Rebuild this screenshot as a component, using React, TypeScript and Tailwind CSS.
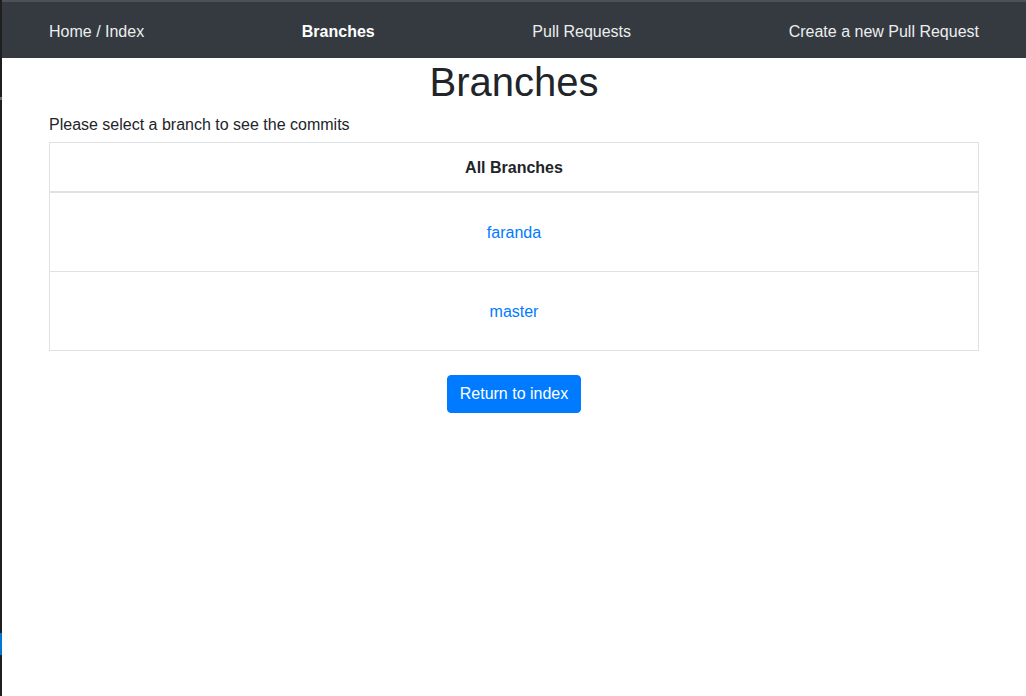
const navLinks = [
  { label: "Home / Index", active: false },
  { label: "Branches", active: true },
  { label: "Pull Requests", active: false },
  { label: "Create a new Pull Request", active: false },
];

const branches = ["faranda", "master"];

export default function App() {
  return (
    <div
      className="relative w-[1026px] h-[696px] bg-white flex text-[#212529] overflow-hidden"
      style={{ fontFamily: '"Liberation Sans", Arial, sans-serif' }}
    >
      {/* window edge strip */}
      <div className="relative w-[2px] shrink-0 bg-[#1f1f1f]">
        <div className="absolute left-0 top-[97px] w-[2px] h-[3px] bg-[#6b6b6b]" />
        <div className="absolute left-0 top-[633px] w-[2px] h-[22px] bg-[#0078d4]" />
      </div>

      <div className="flex-1">
        {/* Navbar */}
        <nav className="h-[58px] bg-[#343a40] border-t-2 border-[#4e5256] pt-[3px]">
          <div className="mx-auto w-[930px] h-full flex items-center justify-between text-[16px] leading-6">
            {navLinks.map((n) => (
              <a
                key={n.label}
                className={n.active ? "font-bold text-white" : "text-[#eceeef]"}
              >
                {n.label}
              </a>
            ))}
          </div>
        </nav>

        {/* Content */}
        <main className="mx-auto w-[930px]">
          <h1 className="text-center text-[40px] leading-[48px] mb-2">Branches</h1>
          <p className="text-[16px] leading-[22px] mb-[6px]">
            Please select a branch to see the commits
          </p>

          <div className="border border-[#dee2e6]">
            <div className="h-[50px] flex items-center justify-center font-bold text-[16px] border-b-2 border-[#dee2e6] pt-[2px]">
              All Branches
            </div>
            <div className="h-[78px] flex items-center justify-center text-[16px] pt-px">
              <a className="text-[#007bff]">{branches[0]}</a>
            </div>
            <div className="h-[79px] flex items-center justify-center text-[16px] border-t border-[#dee2e6] pt-px">
              <a className="text-[#007bff]">{branches[1]}</a>
            </div>
          </div>

          <div className="flex justify-center mt-6">
            <button className="h-[38px] px-3 rounded border border-[#007bff] bg-[#007bff] text-white text-[16px] leading-6">
              Return to index
            </button>
          </div>
        </main>
      </div>
    </div>
  );
}
